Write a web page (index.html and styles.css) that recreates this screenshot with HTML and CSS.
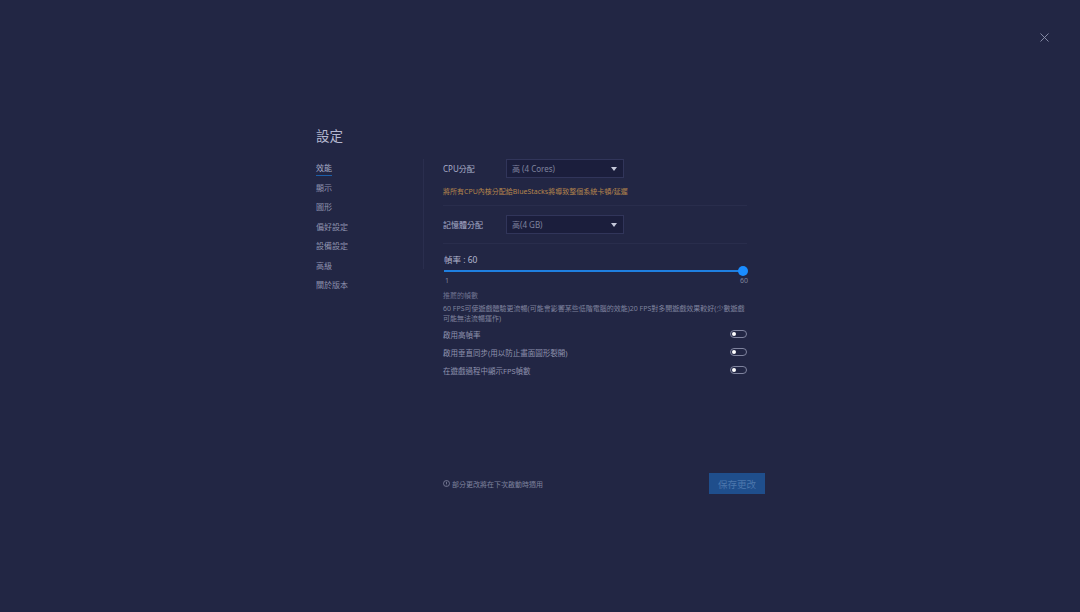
FILE: index.html
```html
<!DOCTYPE html>
<html lang="zh-Hant">
<head>
  <meta charset="UTF-8">
  <title>設定</title>
  <link rel="stylesheet" href="styles.css">
</head>
<body>
  <button class="close" aria-label="close">
    <svg width="9" height="9" viewBox="0 0 9 9"><path d="M.5.5l8 8M8.5.5l-8 8" stroke="#8f93ae" stroke-width=".9" fill="none"/></svg>
  </button>
  <div class="settings">
    <h1>設定</h1>
    <div class="columns">
      <ul class="nav">
        <li class="active"><span>效能</span></li>
        <li><span>顯示</span></li>
        <li><span>圖形</span></li>
        <li><span>偏好設定</span></li>
        <li><span>設備設定</span></li>
        <li><span>高級</span></li>
        <li><span>關於版本</span></li>
      </ul>
      <div class="panel">
        <div class="panel-body">
          <div class="row">
            <label class="row-label">CPU分配</label>
            <div class="select"><span>高 (4 Cores)</span><i class="caret"></i></div>
          </div>
          <p class="warn">將所有CPU內核分配給BlueStacks將導致整個系統卡頓/延遲</p>
          <div class="sep sep-cpu"></div>
          <div class="row">
            <label class="row-label">記憶體分配</label>
            <div class="select"><span>高(4 GB)</span><i class="caret"></i></div>
          </div>
          <div class="sep sep-mem"></div>
          <div class="fps-label">幀率 : 60</div>
          <div class="slider"><div class="track"></div><div class="thumb"></div></div>
          <div class="range"><span>1</span><span>60</span></div>
          <p class="tip-title">推薦的幀數</p>
          <p class="tip">60 FPS可使遊戲體驗更流暢(可能會影響某些低階電腦的效能)20 FPS對多開遊戲效果較好(少數遊戲可能無法流暢運作)</p>
          <div class="toggle-row"><span>啟用高幀率</span><i class="toggle"></i></div>
          <div class="toggle-row"><span>啟用垂直同步(用以防止畫面圖形裂開)</span><i class="toggle"></i></div>
          <div class="toggle-row"><span>在遊戲過程中顯示FPS幀數</span><i class="toggle"></i></div>
        </div>
        <div class="footer">
          <div class="note">
            <svg width="7" height="7" viewBox="0 0 7 7"><circle cx="3.5" cy="3.5" r="3" fill="none" stroke="#8f93ae" stroke-width=".7"/><path d="M3.5 1.7v2.4M3.5 4.7v.7" stroke="#8f93ae" stroke-width=".7"/></svg>
            <span>部分更改將在下次啟動時適用</span>
          </div>
          <button class="save">保存更改</button>
        </div>
      </div>
    </div>
  </div>
</body>
</html>
```

FILE: styles.css
```css
body { margin: 0; width: 1080px; height: 612px; overflow: hidden; position: relative; background: #222644; color: #8f93ae; font-family: "Noto Sans", "Noto Sans CJK TC", sans-serif; font-size: 8px; }
p, h1, ul { margin: 0; padding: 0; }
.close { position: absolute; left: 1040px; top: 33px; width: 9px; height: 9px; padding: 0; border: none; background: none; display: flex; }

.settings { padding: 126px 0 0 316px; }
h1 { font-size: 13.5px; line-height: 18px; font-weight: 400; color: #b5b8d0; font-family: "Noto Sans CJK TC", sans-serif; }
.columns { display: flex; margin-top: 15px; }

.nav { list-style: none; width: 107px; font-size: 8px; }
.nav li { height: 19.5px; line-height: 17px; color: #8f93ae; }
.nav li.active span { color: #a9adc8; display: inline-block; line-height: 14px; border-bottom: 1px solid #1d5fa8; }

.panel { width: 342px; }
.panel-body { width: 304px; padding-left: 20px; position: relative; }
.panel-body::before { content: ""; position: absolute; left: 0; top: 0; width: 1px; height: 110px; background: #2a2e4e; }

.row { display: flex; align-items: center; }
.row-label { width: 63px; font-size: 8px; color: #a9adc8; }
.select { width: 118px; height: 19px; padding: 0 6px 0 5px; box-sizing: border-box; display: flex; align-items: center; justify-content: space-between; background: #1b1e3c; border: 1px solid #31355a; font-size: 8px; color: #7f839e; }
.caret { width: 0; height: 0; border-left: 3px solid transparent; border-right: 3px solid transparent; border-top: 4px solid #c5c8da; }

.warn { margin-top: 8px; line-height: 11px; font-size: 7px; color: #b5854c; }
.sep { height: 1px; background: #292d4c; }
.sep-cpu { margin: 8px 0 9px; }
.sep-mem { margin-top: 9px; }

.fps-label { margin-top: 9px; padding-left: 1px; line-height: 13px; font-size: 8.5px; color: #b5b8d0; }
.slider { position: relative; height: 10px; margin: 0 -1px 0 0; }
.track { position: absolute; left: 1px; right: 5px; top: 4px; height: 2px; background: #1f7fe0; }
.thumb { position: absolute; right: 0; top: 0; width: 10px; height: 10px; border-radius: 50%; background: #1a8cff; }
.range { display: flex; justify-content: space-between; margin: -1px -1px 0 0; padding-left: 2px; line-height: 11px; font-size: 7px; color: #7f839e; }

.tip-title { margin-top: 4px; line-height: 11px; font-size: 7px; color: #6f7390; }
.tip { margin-top: 3px; line-height: 9.5px; font-size: 7px; color: #7f839e; }

.toggle-row { display: flex; align-items: center; justify-content: space-between; height: 18px; font-size: 7.5px; color: #8f93ae; }
.tip + .toggle-row { margin-top: 2px; }
.toggle { position: relative; width: 17px; height: 8px; box-sizing: border-box; border: 1px solid #7f839e; border-radius: 4px; }
.toggle::after { content: ""; position: absolute; left: 1px; top: 1px; width: 4px; height: 4px; border-radius: 50%; background: #fff; }

.footer { display: flex; align-items: center; justify-content: space-between; margin-top: 94px; padding-left: 20px; }
.note { display: flex; align-items: center; gap: 2px; font-size: 7px; color: #7f839e; }
.save { width: 56px; height: 21px; padding: 0; border: none; background: #1f4e8c; color: #4c77ad; font-family: "Noto Sans CJK TC", sans-serif; font-size: 9.5px; }
```
